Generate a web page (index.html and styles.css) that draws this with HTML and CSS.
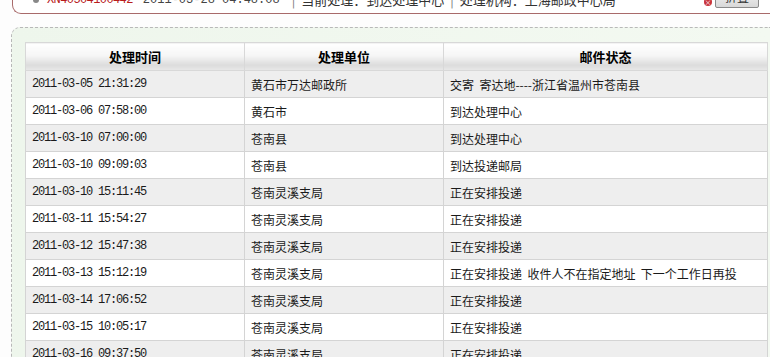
FILE: index.html
```html
<!DOCTYPE html>
<html>
<head>
<meta charset="utf-8">
<link rel="stylesheet" href="styles.css">
</head>
<body>
<div class="page">
  <div class="topbox">
    <div class="topline">
      <span class="dot"></span>
      <span class="mailno">XN40504100442</span>
      <span class="toptime">2011-03-28 04:48:08</span>
      <span class="sep">|</span>
      <span class="cur">当前处理：到达处理中心</span>
      <span class="sep">|</span>
      <span class="cur">处理机构：上海邮政中心局</span>
      <span class="spacer"></span>
      <span class="close">×</span>
      <button class="fold">折叠</button>
    </div>
  </div>
  <div class="panel">
    <table class="track">
      <colgroup><col class="c1"><col class="c2"><col class="c3"></colgroup>
      <thead>
        <tr><th>处理时间</th><th>处理单位</th><th>邮件状态</th></tr>
      </thead>
      <tbody>
        <tr><td class="t">2011-03-05 21:31:29</td><td>黄石市万达邮政所</td><td>交寄&nbsp;&nbsp;寄达地----浙江省温州市苍南县</td></tr>
        <tr><td class="t">2011-03-06 07:58:00</td><td>黄石市</td><td>到达处理中心</td></tr>
        <tr><td class="t">2011-03-10 07:00:00</td><td>苍南县</td><td>到达处理中心</td></tr>
        <tr><td class="t">2011-03-10 09:09:03</td><td>苍南县</td><td>到达投递邮局</td></tr>
        <tr><td class="t">2011-03-10 15:11:45</td><td>苍南灵溪支局</td><td>正在安排投递</td></tr>
        <tr><td class="t">2011-03-11 15:54:27</td><td>苍南灵溪支局</td><td>正在安排投递</td></tr>
        <tr><td class="t">2011-03-12 15:47:38</td><td>苍南灵溪支局</td><td>正在安排投递</td></tr>
        <tr><td class="t">2011-03-13 15:12:19</td><td>苍南灵溪支局</td><td>正在安排投递&nbsp;&nbsp;收件人不在指定地址&nbsp;&nbsp;下一个工作日再投</td></tr>
        <tr><td class="t">2011-03-14 17:06:52</td><td>苍南灵溪支局</td><td>正在安排投递</td></tr>
        <tr><td class="t">2011-03-15 10:05:17</td><td>苍南灵溪支局</td><td>正在安排投递</td></tr>
        <tr><td class="t">2011-03-16 09:37:50</td><td>苍南灵溪支局</td><td>正在安排投递</td></tr>
      </tbody>
    </table>
  </div>
</div>
</body>
</html>
```
FILE: styles.css
```css
html, body {
  margin: 0;
  padding: 0;
  background: #fdfdfd;
  overflow: hidden;
}
.page {
  width: 770px;
  height: 357px;
  overflow: hidden;
  font-family: "Noto Sans CJK SC", "Liberation Sans", sans-serif;
  font-size: 12px;
  color: #1a1a1a;
}
.topbox {
  margin: -14px 0 0 12px;
  height: 28px;
  border: 1px solid #a86a6a;
  border-top: none;
  border-right: none;
  border-radius: 0 0 0 9px;
  background: #fff;
  box-sizing: border-box;
}
.topline {
  display: flex;
  align-items: center;
  height: 27px;
  padding-left: 20px;
  font-size: 13px;
  white-space: nowrap;
}
.dot {
  width: 6px;
  height: 6px;
  border-radius: 50%;
  background: #888;
  margin-right: 8px;
}
.mailno {
  font-family: "Liberation Mono", monospace;
  font-size: 12px;
  color: #b81c1c;
  letter-spacing: -0.6px;
  margin-right: 10px;
}
.toptime {
  font-family: "Liberation Mono", monospace;
  font-size: 12px;
  color: #444;
  margin-right: 12px;
}
.sep { color: #777; margin: 0 6px 0 0; }
.cur { color: #333; margin-right: 6px; }
.spacer { flex: 1; }
.close {
  width: 8px;
  height: 8px;
  border-radius: 50%;
  background: #c8343c;
  color: #fff;
  font-size: 7px;
  line-height: 8px;
  text-align: center;
  margin-right: 3px;
  margin-top: 4px;
}
.fold {
  width: 44px;
  height: 22px;
  margin: 0 11px 0 0;
  padding: 0;
  border: 1px solid #8a8a8a;
  border-radius: 2px;
  background: linear-gradient(#fafafa, #d8d8d8);
  font-family: "Noto Sans CJK SC", sans-serif;
  font-size: 12px;
  color: #333;
  margin-top: -6px;
}
.panel {
  margin: 13px 0 0 11px;
  height: 340px;
  border-top: 1px dashed #b8b8b8;
  border-left: 1px dashed #b8b8b8;
  border-radius: 9px 0 0 0;
  background: linear-gradient(90deg, #eef6ec, #f3f9f1);
  padding: 14px 0 0 13px;
}
.track {
  width: 742px;
  border-collapse: collapse;
  table-layout: fixed;
  background: #fff;
}
.c1 { width: 219px; }
.c2 { width: 199px; }
.c3 { width: 324px; }
.track th {
  height: 27px;
  padding: 0;
  font-size: 13px;
  font-weight: bold;
  color: #000;
  text-align: center;
  border: 1px solid #d8d8d8;
  background: linear-gradient(#ffffff 0%, #f6f6f6 45%, #dcdcdc 80%, #e8e8e8 100%);
}
.track td {
  height: 26px;
  padding: 0 0 0 6px;
  border: 1px solid #d4d4d4;
  color: #1a1a1a;
  white-space: nowrap;
  overflow: hidden;
}
.track tbody tr:nth-child(odd) td { background: #eeeeee; }
.track tbody tr:nth-child(even) td { background: #ffffff; }
.track td.t {
  font-family: "Liberation Mono", monospace;
  font-size: 12px;
  letter-spacing: -1.2px;
  color: #1a1a1a;
}
```
